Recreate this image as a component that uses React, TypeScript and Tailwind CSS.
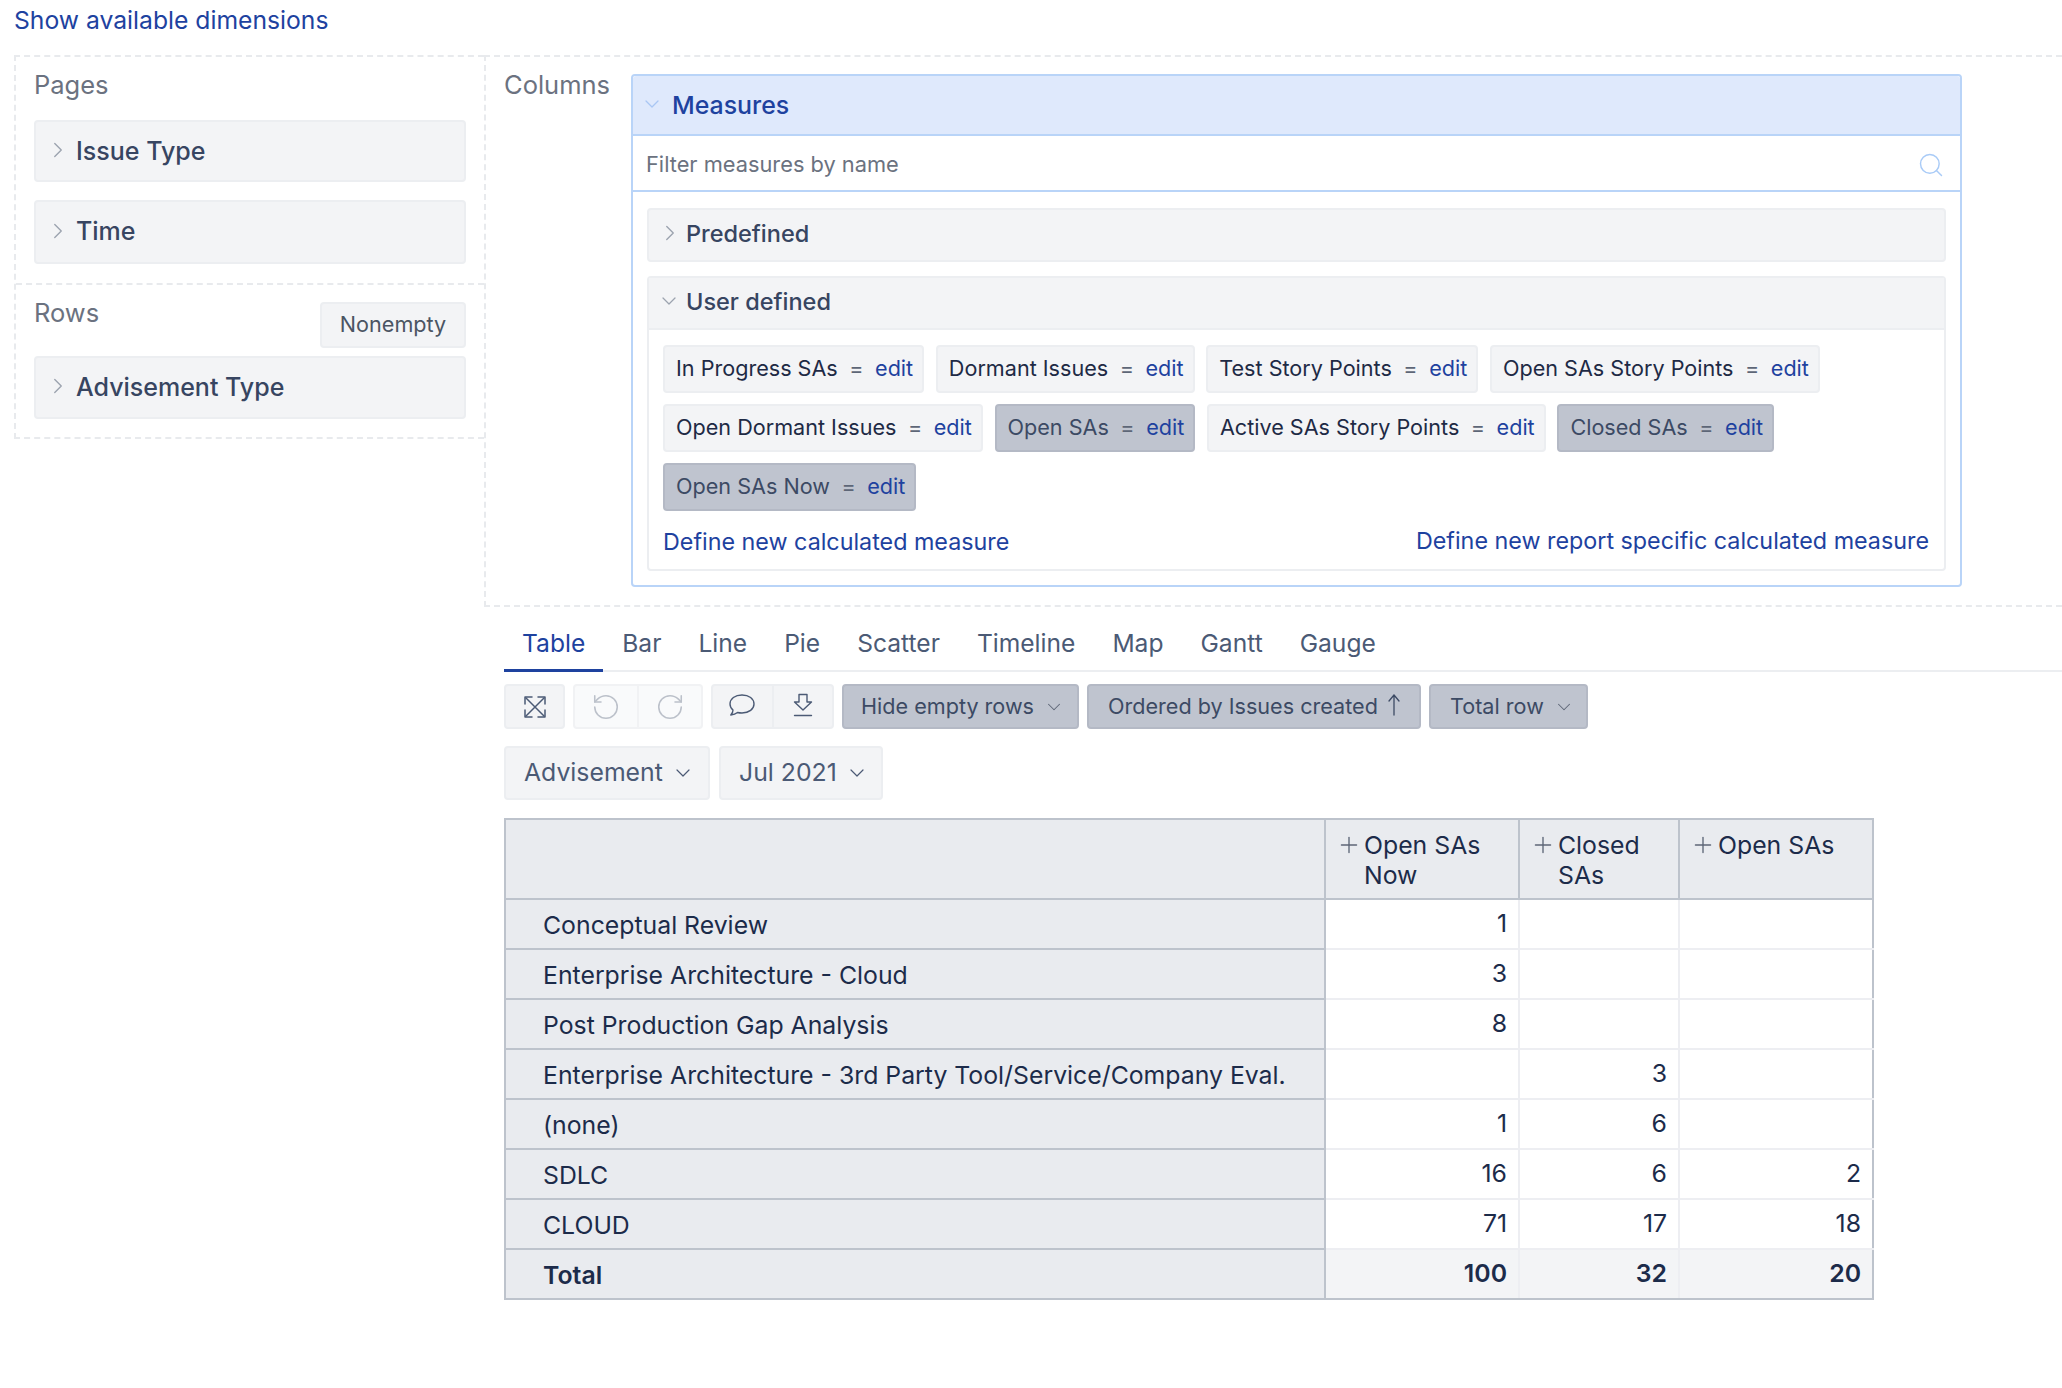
import type { ReactNode } from 'react'
import { ChevronDown, ChevronRight, Plus, RotateCcw, RotateCw, Search } from 'lucide-react'

const pageItems = ['Issue Type', 'Time']

const measureRows = [
  { name: 'In Progress SAs' },
  { name: 'Dormant Issues' },
  { name: 'Test Story Points' },
  { name: 'Open SAs Story Points' },
  { name: 'Open Dormant Issues' },
  { name: 'Open SAs', selected: true },
  { name: 'Active SAs Story Points' },
  { name: 'Closed SAs', selected: true },
  { name: 'Open SAs Now', selected: true },
]

const tabs = ['Table', 'Bar', 'Line', 'Pie', 'Scatter', 'Timeline', 'Map', 'Gantt', 'Gauge']

const rows = [
  ['Conceptual Review', '1', '', ''],
  ['Enterprise Architecture - Cloud', '3', '', ''],
  ['Post Production Gap Analysis', '8', '', ''],
  ['Enterprise Architecture - 3rd Party Tool/Service/Company Eval.', '', '3', ''],
  ['(none)', '1', '6', ''],
  ['SDLC', '16', '6', '2'],
  ['CLOUD', '71', '17', '18'],
]

function DimensionBar({ label, className }: { label: string; className: string }) {
  return (
    <div className={`flex items-center rounded-[4px] border-2 border-[#eceef1] bg-[#f3f4f6] ${className}`}>
      <ChevronRight className="ml-[9px] mb-[3px] h-[26px] w-[26px] text-[#9ca3af]" strokeWidth={1.25} />
      <span className="ml-[5px] text-[25px] font-medium text-[#374561]">{label}</span>
    </div>
  )
}

function MeasureChip({ name, selected }: { name: string; selected?: boolean }) {
  return (
    <div
      className={`flex h-[48px] items-center rounded-[4px] border-2 pb-[1px] pl-[11px] pr-[9px] text-[21.6px] ${
        selected ? 'border-[#b4b9c5] bg-[#bfc4cf] text-[#3c4a64]' : 'border-[#eceef1] bg-[#f3f4f6] text-[#1e2a45]'
      }`}
    >
      <span>{name}</span>
      <span className="mx-[11.5px] text-[#5d6677]">=</span>
      <span className="text-[#1e429f]">edit</span>
    </div>
  )
}

function ToolButton({ children, className = '' }: { children: ReactNode; className?: string }) {
  return (
    <div className={`flex h-full items-center justify-center ${className}`}>{children}</div>
  )
}

function SelectButton({ label, className }: { label: string; className: string }) {
  return (
    <div className={`flex h-[45px] items-center rounded-[4px] border-2 border-[#b4b9c5] bg-[#bfc4cf] text-[21.6px] text-[#3c4a64] ${className}`}>
      {label}
      <ChevronDown className="ml-[9px] h-[22px] w-[22px] text-[#5d6677]" strokeWidth={1.1} />
    </div>
  )
}

export default function App() {
  return (
    <div className="h-[1388px] w-[2062px] overflow-hidden bg-white font-['Inter',sans-serif]">
      <div className="flex h-[55px] items-start pl-[14px] pt-[4px] text-[24.7px] leading-[32px] text-[#1e429f]">
        Show available dimensions
      </div>

      <div className="flex items-start pl-[14px]">
        {/* pages + rows */}
        <div className="w-[470px] border-l-2 border-t-2 border-b-2 border-dashed border-[#e8eaed]">
          <div className="h-[226px] px-[18px]">
            <div className="flex h-[63px] items-start pt-[12px] text-[25.5px] leading-[32px] text-[#6b7280]">Pages</div>
            <div className="flex flex-col gap-[18px]">
              {pageItems.map(item => (
                <DimensionBar key={item} label={item} className={item === 'Time' ? 'h-[64px]' : 'h-[62px] pt-[1px]'} />
              ))}
            </div>
          </div>
          <div className="h-[154px] border-t-2 border-dashed border-[#e8eaed] px-[18px]">
            <div className="flex h-[71px] items-start justify-between pt-[17px]">
              <span className="-mt-[5px] text-[25.5px] leading-[32px] text-[#6b7280]">Rows</span>
              <span className="flex h-[46px] w-[146px] items-center justify-center rounded-[4px] border-2 border-[#eceef1] bg-[#f3f4f6] pb-[1px] text-[21.6px] text-[#4b5563]">
                Nonempty
              </span>
            </div>
            <DimensionBar label="Advisement Type" className="h-[63px]" />
          </div>
        </div>

        {/* columns */}
        <div className="flex h-[552px] flex-1 items-start border-y-2 border-l-2 border-dashed border-[#e8eaed] pl-[18px] pt-[17px]">
          <div className="-mt-[5px] w-[127px] text-[25.5px] leading-[32px] text-[#6b7280]">Columns</div>
          <div className="flex h-[513px] w-[1331px] flex-col rounded-[4px] border-2 border-[#b9d4f8]">
            <div className="flex h-[60px] items-center rounded-t-[3px] border-b-2 border-[#b9d4f8] bg-[#dfe9fc]">
              <ChevronDown className="ml-[7px] mb-[2px] h-[24px] w-[24px] text-[#a9c6f4]" strokeWidth={1.25} />
              <span className="ml-[8px] pt-[1px] text-[24.9px] font-medium text-[#1e429f]">Measures</span>
            </div>
            <div className="flex h-[56px] items-center justify-between border-b-2 border-[#b9d4f8] pl-[13px] pr-[15px] pt-[3px]">
              <span className="text-[21.8px] text-[#6b7280]">Filter measures by name</span>
              <Search className="h-[28px] w-[28px] text-[#a9cbf7]" strokeWidth={1.25} />
            </div>
            <div className="px-[14px] pt-[16px]">
              <div className="flex h-[54px] items-center rounded-[4px] border-2 border-[#eceef1] bg-[#f3f4f6] pb-[2px]">
                <ChevronRight className="ml-[8px] mb-[3px] h-[26px] w-[26px] text-[#9ca3af]" strokeWidth={1.25} />
                <span className="ml-[3px] text-[23.5px] font-medium text-[#374561]">Predefined</span>
              </div>
              <div className="mt-[14px] h-[295px] rounded-[4px] border-2 border-[#eceef1]">
                <div className="flex h-[52px] items-center border-b-2 border-[#eceef1] bg-[#f3f4f6] pb-[2px]">
                  <ChevronDown className="ml-[8px] mb-[3px] h-[24px] w-[24px] text-[#9ca3af]" strokeWidth={1.25} />
                  <span className="ml-[5px] text-[23.5px] font-medium text-[#374561]">User defined</span>
                </div>
                <div className="flex flex-wrap gap-x-[11.7px] gap-y-[11px] pl-[14px] pr-[10px] pt-[15px]">
                  {measureRows.map(m => (
                    <MeasureChip key={m.name} name={m.name} selected={m.selected} />
                  ))}
                </div>
                <div className="mt-[11px] flex items-center justify-between pl-[14px] pr-[15px] text-[23.3px] text-[#1e429f]">
                  <span className="mt-[3px]">Define new calculated measure</span>
                  <span>Define new report specific calculated measure</span>
                </div>
              </div>
            </div>
          </div>
        </div>
      </div>

      {/* report */}
      <div className="pl-[504px]">
        <div className="mt-[21px] flex h-[44px] gap-[1px] border-b-2 border-[#eceef1]">
          {tabs.map(tab => (
            <div
              key={tab}
              className={`-mb-[2px] flex h-[44px] items-start px-[18px] text-[24.6px] leading-[30px] ${
                tab === 'Table' ? 'border-b-[3px] border-[#1e429f] text-[#1e429f]' : 'text-[#4b5a75]'
              }`}
            >
              {tab}
            </div>
          ))}
        </div>

        <div className="mt-[12px] flex h-[45px] gap-[8px]">
          <div className="flex w-[61px] items-center justify-center rounded-[4px] border-2 border-[#eceef1] bg-[#f3f4f6]">
            <svg viewBox="0 0 24 24" className="h-[24px] w-[24px] text-[#4b5a75]" fill="none" stroke="currentColor" strokeWidth="1.5" strokeLinecap="round" strokeLinejoin="round">
              <path d="M3 3 L21 21 M21 3 L3 21" />
              <path d="M2 9 V2 H9 M15 2 H22 V9 M2 15 V22 H9 M15 22 H22 V15" />
            </svg>
          </div>
          <div className="flex w-[130px] rounded-[4px] border-2 border-[#f1f2f4] bg-[#f9fafb]">
            <ToolButton className="flex-1 border-r-2 border-[#f1f2f4]">
              <RotateCcw className="h-[30px] w-[30px] text-[#bcc1ca]" strokeWidth={1.25} />
            </ToolButton>
            <ToolButton className="flex-1">
              <RotateCw className="h-[30px] w-[30px] text-[#bcc1ca]" strokeWidth={1.25} />
            </ToolButton>
          </div>
          <div className="flex w-[123px] rounded-[4px] border-2 border-[#eceef1] bg-[#f3f4f6]">
            <ToolButton className="flex-1 border-r-2 border-[#eceef1]">
              <svg viewBox="0 0 26 22" className="mb-[3px] h-[22px] w-[26px] text-[#4b5a75]" fill="none" stroke="currentColor" strokeWidth="1.4" strokeLinejoin="round">
                <path d="M13 1 C6 1 1 4.8 1 10 C1 12.6 2.3 14.6 4 16 C4 17.5 3.2 19.5 1.8 21 C4.5 20.8 7 19.8 8.5 18.5 C9.8 18.8 11.4 19 13 19 C20 19 25 15 25 10 C25 4.8 20 1 13 1 Z" />
              </svg>
            </ToolButton>
            <ToolButton className="flex-1">
              <svg viewBox="0 0 20 24" className="mb-[3px] h-[24px] w-[20px] text-[#4b5a75]" fill="none" stroke="currentColor" strokeWidth="1.4" strokeLinejoin="round" strokeLinecap="round">
                <path d="M6 1.5 H14 V9 H18.5 L10 17 L1.5 9 H6 Z" />
                <path d="M1.5 22.5 H18.5" />
              </svg>
            </ToolButton>
          </div>
          <SelectButton label="Hide empty rows" className="w-[237px] pl-[17px]" />
          <div className="flex h-[45px] w-[334px] items-center rounded-[4px] border-2 border-[#b4b9c5] bg-[#bfc4cf] pl-[19px] text-[21.6px] text-[#3c4a64]">
            Ordered by Issues created
            <svg viewBox="0 0 14 22" className="mb-[4px] ml-[9px] h-[22px] w-[14px]" fill="none" stroke="currentColor" strokeWidth="1.3" strokeLinecap="round" strokeLinejoin="round">
              <path d="M7 21 V1 M2 7 L7 1 L12 7" />
            </svg>
          </div>
          <SelectButton label="Total row" className="w-[159px] pl-[19px]" />
        </div>

        <div className="mt-[17px] flex gap-[9px]">
          <div className="flex h-[54px] w-[206px] items-center rounded-[4px] border-2 border-[#eceef1] bg-[#f3f4f6] pl-[18px] text-[24.8px] text-[#4b5a75]">
            Advisement
            <ChevronDown className="ml-[8px] h-[24px] w-[24px]" strokeWidth={1.2} />
          </div>
          <div className="flex h-[54px] w-[164px] items-center rounded-[4px] border-2 border-[#eceef1] bg-[#f3f4f6] pl-[18px] text-[24.8px] text-[#4b5a75]">
            Jul 2021
            <ChevronDown className="ml-[8px] h-[24px] w-[24px]" strokeWidth={1.2} />
          </div>
        </div>

        <table className="mt-[18px] w-[1368px] table-fixed border-collapse text-[24.8px] text-[#1c2b4a]">
          <colgroup>
            <col className="w-[820px]" />
            <col className="w-[194px]" />
            <col className="w-[160px]" />
            <col className="w-[194px]" />
          </colgroup>
          <thead>
            <tr className="h-[80px] bg-[#e9ebef]">
              <th className="border-2 border-[#bdc3cc]" />
              {['Open SAs Now', 'Closed SAs', 'Open SAs'].map(h => (
                <th key={h} className="border-2 border-[#bdc3cc] pl-[38px] pr-[8px] pt-[10px] text-left align-top font-normal leading-[30px]">
                  <span className="relative block">
                    <Plus className="absolute -left-[28px] top-[2px] h-[26px] w-[26px] text-[#5d6677]" strokeWidth={1.25} />
                    {h}
                  </span>
                </th>
              ))}
            </tr>
          </thead>
          <tbody>
            {rows.map(r => (
              <tr key={r[0]} className="h-[50px]">
                <td className="border-2 border-[#bdc3cc] bg-[#e9ebef] pl-[37px] pt-[3px]">{r[0]}</td>
                {r.slice(1).map((v, i) => (
                  <td key={i} className="border-2 border-l-[#edeef2] border-y-[#edeef2] border-r-[#edeef2] pb-[1px] pr-[11px] text-right last:border-r-[#bdc3cc]">
                    {v}
                  </td>
                ))}
              </tr>
            ))}
            <tr className="h-[50px] font-semibold">
              <td className="border-2 border-[#bdc3cc] bg-[#e9ebef] pl-[37px] pt-[3px]">Total</td>
              {['100', '32', '20'].map(v => (
                <td key={v} className="border-2 border-y-[#bdc3cc] border-l-[#edeef2] border-r-[#edeef2] bg-[#f3f4f6] pb-[1px] pr-[11px] text-right last:border-r-[#bdc3cc]">
                  {v}
                </td>
              ))}
            </tr>
          </tbody>
        </table>
      </div>
    </div>
  )
}
